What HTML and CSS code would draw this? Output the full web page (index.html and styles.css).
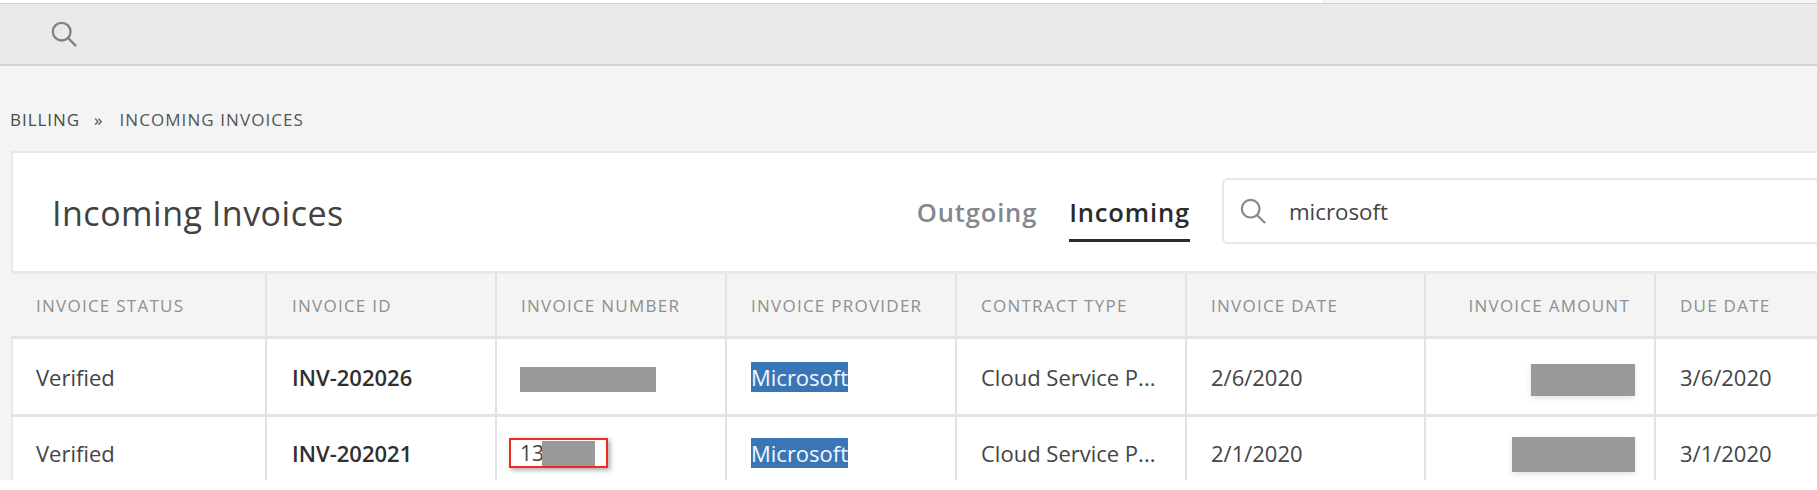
FILE: index.html
```html
<!DOCTYPE html>
<html lang="en">
<head>
<meta charset="utf-8">
<title>Incoming Invoices</title>
<link rel="stylesheet" href="styles.css">
</head>
<body>
<div class="topstrip"></div>
<header class="topbar">
  <svg class="bar-icon" viewBox="0 0 28 28" aria-hidden="true"><circle cx="11.5" cy="11.5" r="9.5"/><path d="M18.5 18.5L27 27"/></svg>
</header>
<main class="main">
  <nav class="crumbs"><span class="crumb-a">BILLING</span><span class="crumb-sep">»</span><span class="crumb-b">INCOMING INVOICES</span></nav>
  <section class="card">
    <div class="card-head">
      <h1 class="title">Incoming Invoices</h1>
      <div class="tabs">
        <a class="tab">Outgoing</a>
        <a class="tab tab-active">Incoming</a>
      </div>
      <div class="search">
        <svg class="search-icon" viewBox="0 0 28 28" aria-hidden="true"><circle cx="11.5" cy="11.5" r="9.5"/><path d="M18.5 18.5L27 27"/></svg>
        <span class="search-text">microsoft</span>
      </div>
    </div>
    <table class="grid">
      <colgroup>
        <col class="c1"><col class="c2"><col class="c2"><col class="c2"><col class="c2"><col class="c6"><col class="c2"><col class="c8">
      </colgroup>
      <thead>
        <tr>
          <th>INVOICE STATUS</th><th>INVOICE ID</th><th>INVOICE NUMBER</th><th>INVOICE PROVIDER</th><th>CONTRACT TYPE</th><th>INVOICE DATE</th><th class="num">INVOICE AMOUNT</th><th>DUE DATE</th>
        </tr>
      </thead>
      <tbody>
        <tr>
          <td>Verified</td><td class="strong">INV-202026</td><td><span class="redact r-number"></span></td><td><span class="hl">Microsoft</span></td><td>Cloud Service P...</td><td>2/6/2020</td><td class="num"><span class="redact r-amount1"></span></td><td>3/6/2020</td>
        </tr>
        <tr>
          <td>Verified</td><td class="strong">INV-202021</td><td><span class="callout">13<span class="redact r-inner"></span></span></td><td><span class="hl">Microsoft</span></td><td>Cloud Service P...</td><td>2/1/2020</td><td class="num"><span class="redact r-amount2"></span></td><td>3/1/2020</td>
        </tr>
      </tbody>
    </table>
  </section>
</main>
</body>
</html>
```
FILE: styles.css
```css
* { box-sizing: border-box; }
html, body { margin: 0; height: 490px; overflow: hidden; background: #fff; }
body { font-family: "Open Sans", "Noto Sans", sans-serif; color: #3f3f3f; }

.topstrip { height: 3px; background: linear-gradient(to right, #fff 1322px, #f4f4f4 1322px); }
.topbar {
  height: 63px;
  background: #eaeaea;
  border-top: 1px solid #d2d2d2;
  border-bottom: 2px solid #d2d2d2;
  display: flex;
  align-items: center;
  padding-left: 51px;
}
.bar-icon { width: 26px; height: 26px; fill: none; stroke: #7f8488; stroke-width: 2.6; }

.main { height: 414px; background: #f4f4f4; padding-left: 10px; overflow: hidden; }
.crumbs { height: 85px; padding-top: 43px; font-size: 17px; line-height: 22px; letter-spacing: .95px; color: #4a4a4a; white-space: nowrap; }
.crumb-sep { margin: 0 16px 0 14px; }
.crumb-b { color: #555; letter-spacing: 1.08px; }

.card { background: #fff; border-top: 2px solid #e8e8e8; border-left: 2px solid #e8e8e8; width: 1900px; height: 329px; margin-left: 1px; }
.card-head { height: 118px; display: flex; align-items: flex-start; padding-left: 39px; position: relative; }
.title { margin: 38px 0 0; width: 879px; font-size: 34px; line-height: 44px; font-weight: 400; color: #424242; letter-spacing: .5px; white-space: nowrap; }
.tabs { display: flex; gap: 32px; margin-top: 41px; }
.tab { height: 48px; font-size: 25.5px; line-height: 36px; font-weight: 600; color: #84888c; letter-spacing: .85px; }
.tab-active { color: #2b2b2b; border-bottom: 3px solid #2b2b2b; }
.search { margin: 25px 0 0 32px; width: 700px; height: 66px; border: 2px solid #e6e6e6; border-radius: 6px; display: flex; align-items: center; padding-left: 16px; }
.search-icon { width: 26px; height: 28px; fill: none; stroke: #85898d; stroke-width: 2.4; flex: none; }
.search-text { margin-left: 23px; font-size: 22.3px; color: #444; }

.grid { border-collapse: collapse; table-layout: fixed; width: 1680px; margin-left: -2px; }
.c1 { width: 255px; }
.c2 { width: 230px; }
.c6 { width: 239px; }
.c8 { width: 220px; }
.grid th, .grid td { border-right: 2px solid #e2e2e2; border-bottom: 3px solid #e4e4e4; padding: 0 0 0 24px; text-align: left; white-space: nowrap; overflow: visible; }
.grid th:nth-child(-n+2), .grid td:nth-child(-n+2) { padding-left: 25px; }
.grid th { height: 65px; background: #f4f4f4; border-top: 3px solid #e8e8e8; font-size: 17px; font-weight: 400; letter-spacing: 1.25px; color: #8f8f8f; }
.grid td { height: 78px; font-size: 22px; color: #444; }
.grid tbody tr:last-child td { height: 66px; border-bottom: 0; vertical-align: top; padding-top: 21px; line-height: 30px; }
.grid th.num { text-align: right; padding: 0 24px 0 0; }
.grid td.num { text-align: right; padding: 0 19px 0 0; }
.grid tbody tr:last-child td.num { padding: 21px 19px 0 0; }
.grid .strong { font-weight: 600; color: #2f2f2f; }

.hl { display: inline-block; height: 30px; line-height: 30px; background: #3a76b5; color: #f2f6fb; }
.redact { display: inline-block; background: #999; vertical-align: middle; }
.r-number { width: 136px; height: 25px; margin-left: -1px; }
.r-amount1 { width: 104px; height: 32px; margin-top: 7px; box-shadow: 0 2px 6px rgba(0,0,0,.12); }
.r-amount2 { width: 123px; height: 35px; margin-top: -4px; box-shadow: 0 2px 6px rgba(0,0,0,.12); }
.callout {
  display: inline-flex; align-items: center; vertical-align: top;
  width: 99px; height: 30px; margin: 0 0 0 -12px;
  padding-left: 9px;
  border: 2px solid #f02b22; background: #fff;
  box-shadow: 2px 2px 5px rgba(0,0,0,.35);
  font-size: 21px; line-height: 26px;
}
.r-inner { width: 53px; height: 25px; margin-left: -2px; }
```
